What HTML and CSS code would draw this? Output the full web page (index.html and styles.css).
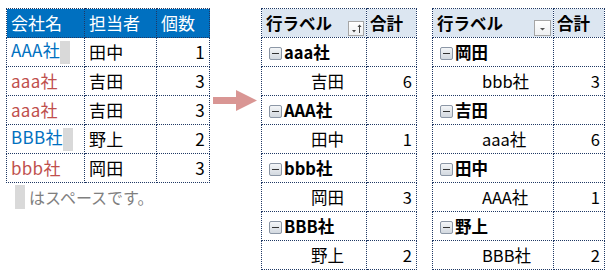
FILE: index.html
```html
<!DOCTYPE html>
<html lang="ja">
<head>
<meta charset="utf-8">
<link rel="stylesheet" href="styles.css">
</head>
<body>
<div class="page">
  <div class="source">
    <table class="src">
      <colgroup><col class="c1"><col class="c2"><col class="c3"></colgroup>
      <thead>
        <tr><th>会社名</th><th>担当者</th><th>個数</th></tr>
      </thead>
      <tbody>
        <tr><td class="blue">AAA社<span class="sp"></span></td><td>田中</td><td class="num">1</td></tr>
        <tr><td class="red">aaa社</td><td>吉田</td><td class="num">3</td></tr>
        <tr><td class="red">aaa社</td><td>吉田</td><td class="num">3</td></tr>
        <tr><td class="blue">BBB社<span class="sp"></span></td><td>野上</td><td class="num">2</td></tr>
        <tr><td class="red">bbb社</td><td>岡田</td><td class="num">3</td></tr>
      </tbody>
    </table>
    <div class="note"><span class="sp note-sp"></span>はスペースです。</div>
  </div>

  <svg class="arrow" width="44" height="22" viewBox="0 0 44 22">
    <polygon points="0,7 23,7 23,0 44,10.5 23,21 23,14 0,14" fill="#d99694"/>
  </svg>

  <table class="pivot p1">
    <colgroup><col class="pa"><col class="pb"></colgroup>
    <thead>
      <tr>
        <th class="lab">行ラベル<span class="fbtn sort"><svg width="14" height="13" viewBox="0 0 14 13"><polygon points="3,8 7,8 5,10.5" fill="#444"/><line x1="10.5" y1="3" x2="10.5" y2="11" stroke="#444" stroke-width="1"/><polygon points="8.5,5 12.5,5 10.5,2.5" fill="#444"/></svg></span></th>
        <th class="sum">合計</th>
      </tr>
    </thead>
    <tbody>
      <tr class="grp"><td><span class="minus"></span>aaa社</td><td></td></tr>
      <tr><td class="child">吉田</td><td class="num">6</td></tr>
      <tr class="grp"><td><span class="minus"></span>AAA社</td><td></td></tr>
      <tr><td class="child">田中</td><td class="num">1</td></tr>
      <tr class="grp"><td><span class="minus"></span>bbb社</td><td></td></tr>
      <tr><td class="child">岡田</td><td class="num">3</td></tr>
      <tr class="grp"><td><span class="minus"></span>BBB社</td><td></td></tr>
      <tr><td class="child">野上</td><td class="num">2</td></tr>
    </tbody>
  </table>

  <table class="pivot p2">
    <colgroup><col class="qa"><col class="qb"></colgroup>
    <thead>
      <tr>
        <th class="lab">行ラベル<span class="fbtn drop"><svg width="15" height="14" viewBox="0 0 15 14"><polygon points="5,7 10,7 7.5,9.5" fill="#555"/></svg></span></th>
        <th class="sum">合計</th>
      </tr>
    </thead>
    <tbody>
      <tr class="grp"><td><span class="minus"></span>岡田</td><td></td></tr>
      <tr><td class="child">bbb社</td><td class="num">3</td></tr>
      <tr class="grp"><td><span class="minus"></span>吉田</td><td></td></tr>
      <tr><td class="child">aaa社</td><td class="num">6</td></tr>
      <tr class="grp"><td><span class="minus"></span>田中</td><td></td></tr>
      <tr><td class="child">AAA社</td><td class="num">1</td></tr>
      <tr class="grp"><td><span class="minus"></span>野上</td><td></td></tr>
      <tr><td class="child">BBB社</td><td class="num">2</td></tr>
    </tbody>
  </table>
</div>
</body>
</html>
```

FILE: styles.css
```css
html, body {
  margin: 0;
  padding: 0;
  background: #ffffff;
}
body {
  font-family: "Noto Sans CJK JP", "Noto Sans", sans-serif;
  font-size: 16px;
  color: #000;
}
.page {
  display: flex;
  align-items: flex-start;
  padding: 8px 0 0 6px;
}
table {
  border-collapse: collapse;
  table-layout: fixed;
}
th, td {
  border: 1px dotted #1f3864;
  height: 29px;
  padding: 0 4px;
  white-space: nowrap;
  line-height: 20px;
  box-sizing: border-box;
}
.source {
  width: 203px;
  flex: none;
}
.src { width: 203px; }
.src .c1 { width: 78px; }
.src .c2 { width: 72px; }
.src .c3 { width: 53px; }
.src th {
  background: #0070c0;
  color: #ffffff;
  font-weight: normal;
  text-align: left;
  font-size: 17px;
}
.src td { font-size: 17px; letter-spacing: 0.3px; }
.src .num { text-align: right; }
.blue { color: #0070c0; }
.red { color: #c0504d; }
.sp {
  display: inline-block;
  width: 10px;
  height: 23px;
  background: #d9d9d9;
  vertical-align: middle;
}
.note {
  display: flex;
  align-items: center;
  margin-top: 2px;
  padding-left: 9px;
  color: #7f7f7f;
  font-size: 16px;
  height: 24px;
}
.note-sp { margin-right: 4px; height: 24px; }
.arrow {
  flex: none;
  margin: 82px 4px 0 4px;
}
.pivot th {
  background: #dce6f1;
  font-weight: bold;
  text-align: left;
  font-size: 16.5px;
  position: relative;
}
.pivot td { font-size: 16.5px; }
.p1 { width: 155px; margin-right: 15px; }
.p1 .pa { width: 105px; }
.p1 .pb { width: 50px; }
.p2 { width: 172px; }
.p2 .qa { width: 121px; }
.p2 .qb { width: 51px; }
.pivot .sum { padding-left: 3px; }
.pivot .num { text-align: right; }
.pivot .grp td { font-weight: bold; }
.pivot .grp td:first-child { padding-left: 7px; }
.pivot .child { padding-left: 49px; }
.minus {
  display: inline-block;
  width: 11px;
  height: 11px;
  border: 1px solid #8c97a6;
  border-radius: 2px;
  background: linear-gradient(#f4f6f8, #d3d9e0);
  margin-right: 2px;
  vertical-align: -1px;
  position: relative;
  box-sizing: content-box;
}
.minus::after {
  content: "";
  position: absolute;
  left: 2px;
  right: 2px;
  top: 5px;
  height: 1px;
  background: #333;
}
.fbtn {
  position: absolute;
  right: 2px;
  bottom: 1px;
  border: 1px solid #a6a6a6;
  background: linear-gradient(#ffffff, #eef0f2);
  line-height: 0;
}
.fbtn svg { display: block; }
```
